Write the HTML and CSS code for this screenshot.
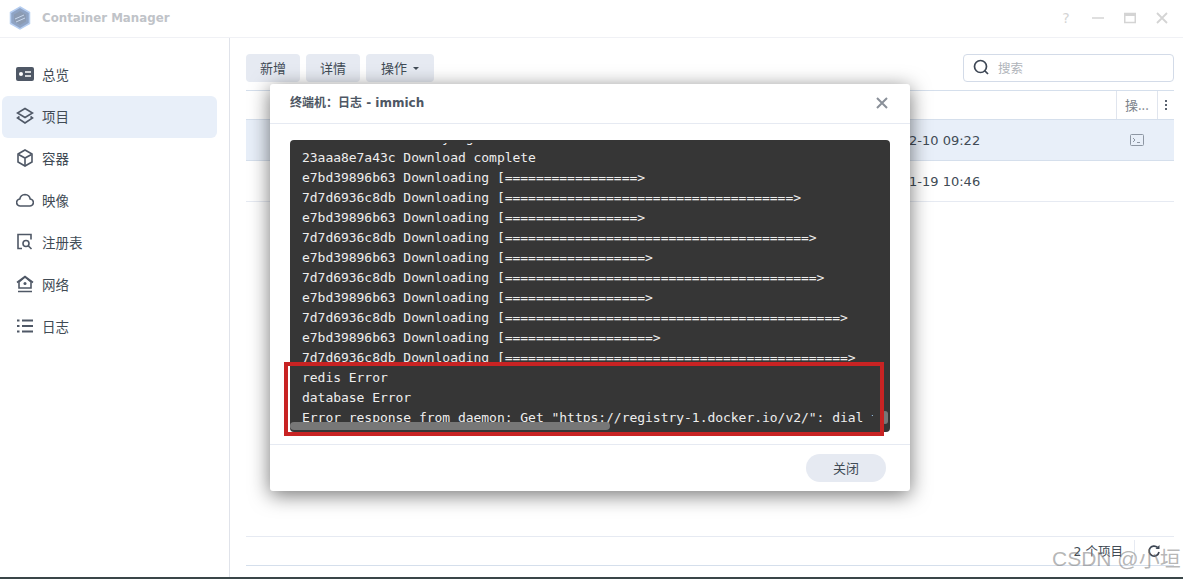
FILE: index.html
```html
<!DOCTYPE html>
<html lang="zh">
<head>
<meta charset="utf-8">
<title>Container Manager</title>
<link rel="stylesheet" href="styles.css">
</head>
<body>
<div class="app">
  <header class="titlebar">
    <svg class="logo" width="22" height="24" viewBox="0 0 22 24"><path d="M11 1l9.500 5.500v11L11 23 1.500 17.500v-11z" fill="#8ea3c4" stroke="#b5cdf0" stroke-width="1.500"/><path d="M11 5l6 3.500v7L11 19l-6-3.500v-7z" fill="#8b9bb3"/><path d="M6 13l9-4M7 16l9-4" stroke="#c9d8ee" stroke-width="1"/></svg>
    <span class="app-name">Container Manager</span>
    <div class="win-controls">
      <span class="help">?</span>
      <svg width="12" height="12" viewBox="0 0 12 12"><path d="M0 6h12" stroke="#d4d4d4" stroke-width="1.500"/></svg>
      <svg width="12" height="12" viewBox="0 0 12 12"><rect x=".75" y="1.500" width="10.500" height="9" fill="none" stroke="#d4d4d4" stroke-width="1.500"/><path d="M1 3h10" stroke="#d4d4d4" stroke-width="2"/></svg>
      <svg width="12" height="12" viewBox="0 0 12 12"><path d="M1 1l10 10M11 1L1 11" stroke="#d4d4d4" stroke-width="1.800"/></svg>
    </div>
  </header>
  <div class="body">
    <nav class="sidebar">
      <a class="nav-item"><svg width="18" height="18" viewBox="0 0 18 18"><rect y="2" width="18" height="14" rx="2" fill="#4f5866"/><circle cx="5" cy="9" r="2" fill="#fff"/><path d="M9 7h6M9 11h6" stroke="#fff" stroke-width="1.400"/></svg>总览</a>
      <a class="nav-item active"><svg width="18" height="18" viewBox="0 0 18 18" fill="none" stroke="#4f5866" stroke-width="1.600"><path d="M9 1.500L16.500 6 9 10.500 1.500 6z"/><path d="M3.500 9.500L1.500 11 9 16l7.500-5-2-1.500"/></svg>项目</a>
      <a class="nav-item"><svg width="18" height="18" viewBox="0 0 18 18" fill="none" stroke="#4f5866" stroke-width="1.600"><path d="M9 1l7 4v8l-7 4-7-4V5z"/><path d="M2.500 5.500L9 9l6.500-3.500M9 9v7.500"/></svg>容器</a>
      <a class="nav-item"><svg width="18" height="18" viewBox="0 0 18 18" fill="none" stroke="#4f5866" stroke-width="1.600"><path d="M4.500 15A3.500 3.500 0 0 1 3.800 8 5.500 5.500 0 0 1 9 3.500 5.500 5.500 0 0 1 14.200 8a3.500 3.500 0 0 1-.7 7z"/></svg>映像</a>
      <a class="nav-item"><svg width="18" height="18" viewBox="0 0 18 18" fill="none" stroke="#4f5866" stroke-width="1.600"><path d="M6 15.500H2v-14h13v5"/><circle cx="10" cy="10.500" r="3"/><path d="M12.200 12.700l3.300 3.300"/></svg>注册表</a>
      <a class="nav-item"><svg width="18" height="18" viewBox="0 0 18 18" fill="none" stroke="#4f5866" stroke-width="1.600"><path d="M3 13V7L9 2l6 5v6z"/><path d="M1 7.500L9 1.500l8 6M2 16.500h14"/><circle cx="9" cy="8.500" r="1.500" fill="#4f5866" stroke="none"/></svg>网络</a>
      <a class="nav-item"><svg width="18" height="18" viewBox="0 0 18 18" fill="none" stroke="#4f5866" stroke-width="1.800"><path d="M1 3.500h2.500M1 9h2.500M1 14.500h2.500M6 3.500h11M6 9h11M6 14.500h11"/></svg>日志</a>
    </nav>
    <main class="main">
      <div class="toolbar">
        <button class="btn">新增</button>
        <button class="btn">详情</button>
        <button class="btn btn-menu">操作<i class="caret"></i></button>
        <div class="search">
          <svg width="16" height="16" viewBox="0 0 16 16" fill="none" stroke="#3d4654" stroke-width="1.700"><circle cx="7.500" cy="7.500" r="6"/><path d="M11.500 11.500L15 15"/></svg>
          <span>搜索</span>
        </div>
      </div>
      <div class="table">
        <div class="thead">
          <div class="th"></div>
          <div class="th th-act">操...</div>
          <div class="th th-more"><i></i><i></i><i></i></div>
        </div>
        <div class="row selected">
          <div class="name"></div><div class="time">2024-12-10 09:22</div>
          <div class="act"><svg width="14" height="12" viewBox="0 0 14 12" fill="none" stroke="#8d96a3"><rect x=".5" y=".5" width="13" height="11" rx="1"/><path d="M3 4l2 2-2 2M7 8.500h3"/></svg></div>
        </div>
        <div class="row">
          <div class="name"></div><div class="time">2024-11-19 10:46</div>
          <div class="act"></div>
        </div>
      </div>
      <div class="pager">
        <span class="count">2 个项目</span>
        <svg width="14" height="14" viewBox="0 0 14 14" fill="none" stroke="#3d4654" stroke-width="1.700"><path d="M12 8a5 5 0 1 1-1.500-4.600"/><path d="M12.500 1v4h-4" fill="#3d4654" stroke="none"/></svg>
      </div>
    </main>
  </div>
  <div class="strip"></div>

  <section class="modal">
    <div class="modal-head">
      <span>终端机：日志 - immich</span>
      <svg width="12" height="12" viewBox="0 0 12 12"><path d="M1 1l10 10M11 1L1 11" stroke="#8a9099" stroke-width="2"/></svg>
    </div>
    <div class="modal-body">
      <div class="term">
        <div class="log">
          <div>23aaa8e7a43c Verifying Checksum</div>
          <div>23aaa8e7a43c Download complete</div>
          <div>e7bd39896b63 Downloading [=================&gt;</div>
          <div>7d7d6936c8db Downloading [=====================================&gt;</div>
          <div>e7bd39896b63 Downloading [=================&gt;</div>
          <div>7d7d6936c8db Downloading [=======================================&gt;</div>
          <div>e7bd39896b63 Downloading [==================&gt;</div>
          <div>7d7d6936c8db Downloading [========================================&gt;</div>
          <div>e7bd39896b63 Downloading [==================&gt;</div>
          <div>7d7d6936c8db Downloading [===========================================&gt;</div>
          <div>e7bd39896b63 Downloading [===================&gt;</div>
          <div>7d7d6936c8db Downloading [============================================&gt;</div>
          <div>redis Error</div>
          <div>database Error</div>
          <div>Error response from daemon: Get "https://registry-1.docker.io/v2/": dial tcp: i/o timeout</div>
        </div>
        <div class="thumb-h"></div>
        <div class="thumb-v"></div>
      </div>
    </div>
    <div class="modal-foot"><button class="btn-close">关闭</button></div>
  </section>
  <div class="redbox"></div>
  <div class="watermark">CSDN @小垣</div>
</div>
</body>
</html>
```
FILE: styles.css
```css
* { box-sizing: border-box; }
html, body { margin: 0; padding: 0; }
body {
  font-family: "DejaVu Sans", "Noto Sans CJK SC", sans-serif;
  font-size: 13px;
  color: #414b55;
  background: #fff;
}
.app {
  position: relative;
  width: 1183px;
  height: 579px;
  overflow: hidden;
  display: flex;
  flex-direction: column;
}
.titlebar {
  height: 38px;
  flex: none;
  display: flex;
  align-items: center;
  padding: 0 15px 2px 9px;
  border-bottom: 1px solid #f0f1f5;
}
.logo { margin-right: 11px; }
.app-name { font-weight: 700; font-size: 11.800px; color: #c0c3c8; }
.win-controls { margin-left: auto; display: flex; align-items: center; gap: 20px; }
.help { color: #d4d4d4; font-size: 14px; width: 12px; text-align: center; }
.body { flex: 1; display: flex; min-height: 0; }
.sidebar {
  width: 230px;
  flex: none;
  border-right: 1px solid #e0e3ea;
  padding: 16px 12px 0 2px;
  display: flex;
  flex-direction: column;
}
.nav-item {
  height: 42px;
  display: flex;
  align-items: center;
  gap: 8px;
  padding: 0 0 2px 14px;
  border-radius: 6px;
  font-family: "Noto Sans CJK SC", sans-serif;
  font-size: 13.500px;
  color: #414b55;
}
.nav-item.active { background: #e8eff9; }
.main {
  flex: 1;
  min-width: 0;
  padding: 16px 9px 11px 16px;
  display: flex;
  flex-direction: column;
}
.toolbar { display: flex; gap: 6px; height: 28px; flex: none; }
.btn, .btn-close {
  border: 0;
  padding: 0 0 2px;
  font-family: "Noto Sans CJK SC", sans-serif;
  font-size: 13px;
  color: #414b55;
  background: #e6eaf2;
}
.btn { width: 54px; height: 28px; border-radius: 4px; }
.btn-menu { width: 68px; }
.caret {
  display: inline-block;
  vertical-align: middle;
  margin-left: 6px;
  border: 3px solid transparent;
  border-top: 3px solid #414b55;
  border-bottom: 0;
}
.search {
  margin-left: auto;
  width: 211px;
  height: 28px;
  border: 1px solid #d3dbe8;
  border-radius: 4px;
  display: flex;
  align-items: center;
  gap: 9px;
  padding: 0 0 2px 9px;
  font-family: "Noto Sans CJK SC", sans-serif;
  font-size: 12.500px;
  color: #b0b4ba;
}
.table { margin-top: 8px; border-top: 1px solid #d5dfec; }
.thead, .row { display: grid; grid-template-columns: 1fr 269px 41px 17px; }
.thead { grid-template-columns: 1fr 41px 17px; height: 29px; border-bottom: 1px solid #d5dfec; }
.th-act {
  border-left: 1px solid #e0e5ee;
  padding: 4px 0 0 8px;
  font-family: "Noto Sans CJK SC", sans-serif;
  font-size: 13px;
  color: #7c838c;
}
.th-more {
  border-left: 1px solid #e0e5ee;
  display: flex;
  flex-direction: column;
  align-items: center;
  justify-content: center;
  gap: 2px;
}
.th-more i { width: 2px; height: 2px; background: #5a6370; }
.row {
  height: 41px;
  align-items: center;
  border-bottom: 1px solid #e6eaf2;
  font-size: 13px;
  color: #414b55;
}
.row.selected { background: #e8eff9; border-bottom-color: #d5dfec; }
.time { white-space: nowrap; padding-left: 16px; }
.act { display: flex; justify-content: center; }
.pager {
  margin-top: auto;
  height: 30px;
  flex: none;
  display: flex;
  align-items: center;
  justify-content: flex-end;
  gap: 22px;
  padding-right: 13px;
  border-top: 1px solid #e6eaf2;
  border-bottom: 1px solid #d5dfec;
  font-family: "DejaVu Sans", "Noto Sans CJK SC", sans-serif;
  font-size: 12.500px;
  color: #414b55;
}
.count { padding: 1px 11px 0 0; border-right: 1px solid #e6eaf2; margin-right: -10px; line-height: 22px; }
.strip { height: 2px; flex: none; background: #3a4648; }
.modal {
  position: absolute;
  left: 270px;
  top: 84px;
  width: 640px;
  height: 407px;
  background: #fff;
  border-radius: 3px;
  box-shadow: 0 4px 20px rgba(0, 0, 0, .55);
  display: flex;
  flex-direction: column;
}
.modal-head {
  height: 40px;
  flex: none;
  display: flex;
  align-items: center;
  justify-content: space-between;
  padding: 0 22px 5px 20px;
  border-bottom: 1px solid #e6eaf2;
  font-weight: 700;
  font-size: 12px;
  color: #4e5764;
}
.modal-head svg { margin-top: 3px; }
.modal-body { flex: 1; padding: 16px 20px 12px; min-height: 0; }
.term {
  position: relative;
  height: 292px;
  background: #363636;
  border-radius: 4px;
  padding: 3px 17px 0 12px;
  overflow: hidden;
}
.log {
  height: 100%;
  overflow: hidden;
  font-family: "DejaVu Sans Mono", monospace;
  font-size: 13px;
  letter-spacing: -.03px;
  line-height: 20px;
  color: #eeeeee;
  white-space: nowrap;
}
.log > div:first-child { margin-top: -15px; }
.thumb-h {
  position: absolute;
  left: 0;
  bottom: 2px;
  width: 320px;
  height: 8px;
  border-radius: 4px;
  background: #777;
}
.thumb-v {
  position: absolute;
  right: 2px;
  top: 271px;
  width: 6px;
  height: 13px;
  border-radius: 3px;
  background: #777;
}
.modal-foot {
  height: 47px;
  flex: none;
  display: flex;
  align-items: center;
  justify-content: flex-end;
  padding: 0 24px 0 0;
  border-top: 1px solid #e6eaf2;
}
.btn-close { width: 80px; height: 28px; border-radius: 14px; }
.redbox {
  position: absolute;
  left: 284px;
  top: 362px;
  width: 600px;
  height: 74px;
  border: 4px solid #c82323;
}
.watermark {
  position: absolute;
  left: 1052px;
  top: 542px;
  font-family: "Liberation Sans", "Noto Sans CJK SC", sans-serif;
  font-size: 21px;
  color: rgba(120, 120, 120, .55);
  white-space: nowrap;
}
```
